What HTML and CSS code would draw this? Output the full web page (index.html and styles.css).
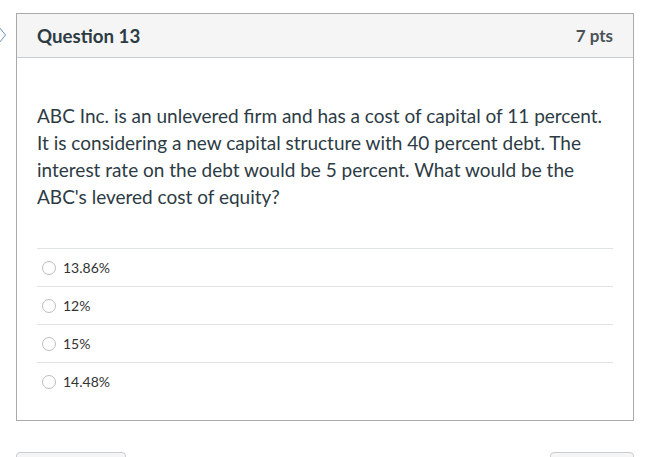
FILE: index.html
```html
<!DOCTYPE html>
<html>
<head>
<meta charset="utf-8">
<link rel="stylesheet" href="styles.css">
</head>
<body>
<div class="page">
  <svg class="chev" width="9" height="18" viewBox="0 0 9 18"><path d="M1 1 L7.5 9 L1 17" fill="none" stroke="#6d8fb5" stroke-width="1"/></svg>
  <div class="card">
    <div class="head">
      <span class="title">Question 13</span>
      <span class="pts">7 pts</span>
    </div>
    <div class="body">
      <p class="text">ABC Inc. is an unlevered firm and has a cost of capital of 11 percent. It is considering a new capital structure with 40 percent debt. The interest rate on the debt would be 5 percent. What would be the ABC's levered cost of equity?</p>
      <div class="answers">
        <div class="ans"><span class="radio"></span><span>13.86%</span></div>
        <div class="ans"><span class="radio"></span><span>12%</span></div>
        <div class="ans"><span class="radio"></span><span>15%</span></div>
        <div class="ans"><span class="radio"></span><span>14.48%</span></div>
      </div>
    </div>
  </div>
  <div class="nav">
    <div class="btn left"></div>
    <div class="btn right"></div>
  </div>
</div>
</body>
</html>
```
FILE: styles.css
```css
html, body { margin: 0; padding: 0; background: #fff; }
body { font-family: Lato, "Open Sans", sans-serif; color: #2d3b45; width: 648px; height: 457px; overflow: hidden; }
.page { position: relative; padding: 13px 15px 0 16px; }
.chev { position: absolute; left: -2px; top: 26px; }
.card { border: 1px solid #aaa; width: 616px; }
.head { height: 43px; background: #f5f5f5; border-bottom: 1px solid #c7cdd1; display: flex; align-items: center; justify-content: space-between; padding: 0 20px 0 20px; }
.title { font-weight: 700; font-size: 18.7px; }
.pts { font-weight: 700; font-size: 17px; color: #4a5258; }
.body { padding: 44px 20px 20px 20px; }
.text { margin: 0; font-size: 19px; line-height: 27px; color: #2d3b45; }
.answers { margin-top: 38px; }
.ans { height: 37px; border-top: 1px solid #e0e3e5; display: flex; align-items: center; font-size: 14px; color: #333; }
.radio { width: 14px; height: 14px; border: 1px solid #bdbdbd; border-radius: 50%; box-sizing: border-box; margin: 0 7px 0 5px; background: #fff; }
.nav { display: flex; justify-content: space-between; margin-top: 31px; width: 618px; }
.btn { height: 20px; border: 1px solid #c7cdd1; border-radius: 4px; background: #f5f5f5; }
.left { width: 108px; }
.right { width: 82px; }
```
